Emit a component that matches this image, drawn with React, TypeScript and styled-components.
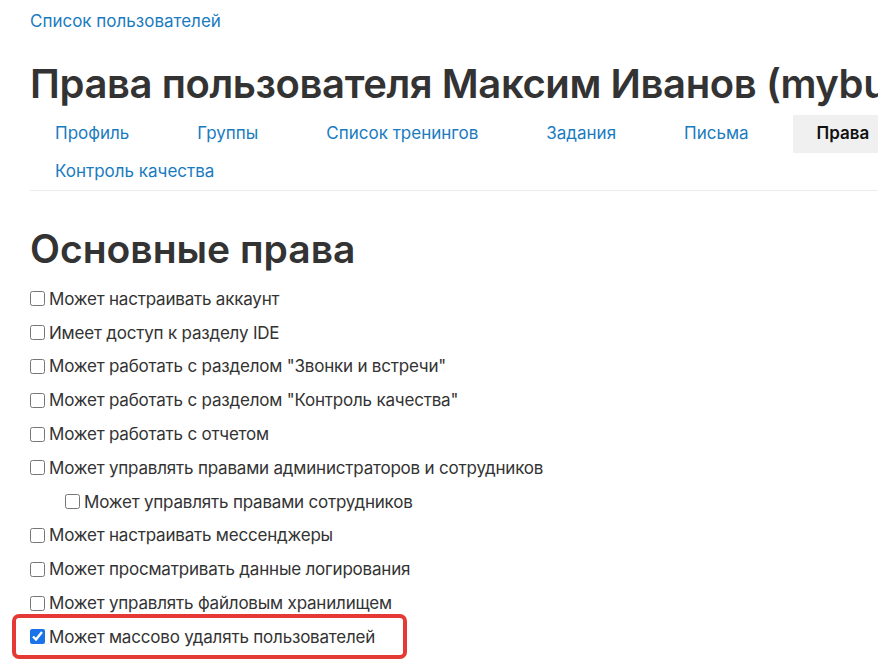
import React from "react";
import styled, { createGlobalStyle } from "styled-components";

const GlobalStyle = createGlobalStyle`
  html, body {
    margin: 0;
    padding: 0;
    background: #fff;
    overflow: hidden;
  }
  body {
    font-family: Inter, "Noto Sans", sans-serif;
    color: #333;
  }
`;

const tabs = [
  { label: "Профиль" },
  { label: "Группы" },
  { label: "Список тренингов" },
  { label: "Задания" },
  { label: "Письма" },
  { label: "Права", active: true },
  { label: "Контроль качества" },
];

const rights = [
  { label: "Может настраивать аккаунт" },
  { label: "Имеет доступ к разделу IDE" },
  { label: 'Может работать с разделом "Звонки и встречи"' },
  { label: 'Может работать с разделом "Контроль качества"' },
  { label: "Может работать с отчетом" },
  { label: "Может управлять правами администраторов и сотрудников" },
  { label: "Может управлять правами сотрудников", nested: true },
  { label: "Может настраивать мессенджеры" },
  { label: "Может просматривать данные логирования" },
  { label: "Может управлять файловым хранилищем" },
  { label: "Может массово удалять пользователей", checked: true, marked: true },
];

const Page = styled.div`
  width: 980px;
  min-height: 672px;
  padding: 9px 0 24px 30px;
  box-sizing: border-box;
`;

const Breadcrumb = styled.a`
  display: block;
  font-size: 17px;
  line-height: 24px;
  color: #1a7bbf;
  text-decoration: none;
`;

const Title = styled.h1`
  margin: 26px 0 0;
  font-size: 40px;
  font-weight: 600;
  letter-spacing: -0.4px;
  line-height: 50px;
  white-space: nowrap;
  color: #333;
`;

const Tabs = styled.nav`
  display: flex;
  flex-wrap: wrap;
  margin-top: 6px;
  padding-left: 1px;
  border-bottom: 1px solid #ececec;
`;

const Tab = styled.a<{ $active?: boolean }>`
  display: block;
  height: 37.5px;
  line-height: 37.5px;
  padding: 0 24px;
  margin-right: 20px;
  font-size: 17px;
  white-space: nowrap;
  text-decoration: none;
  color: ${(p) => (p.$active ? "#111" : "#1a7bbf")};
  font-weight: ${(p) => (p.$active ? 600 : 400)};
  background: ${(p) => (p.$active ? "#f0f0f0" : "transparent")};
`;

const Section = styled.h2`
  margin: 35px 0 10px;
  font-size: 39px;
  font-weight: 600;
  line-height: 46px;
  color: #333;
`;

const List = styled.div`
  display: flex;
  flex-direction: column;
`;

const Row = styled.label<{ $nested?: boolean; $marked?: boolean }>`
  position: relative;
  display: flex;
  align-items: center;
  gap: 4px;
  height: 33.8px;
  padding-left: ${(p) => (p.$nested ? "35px" : "0")};
  font-size: 17px;
  letter-spacing: -0.2px;
  color: #333;
  white-space: nowrap;

  ${(p) =>
    p.$marked &&
    `
    &::after {
      content: "";
      position: absolute;
      left: -18px;
      top: -6px;
      width: 395px;
      height: 45px;
      border: 4px solid #e53935;
      border-radius: 7px;
      box-sizing: border-box;
      pointer-events: none;
    }
  `}
`;

const Box = styled.input`
  width: 15px;
  height: 15px;
  margin: 0;
  accent-color: #1a73e8;
`;

export default function App() {
  return (
    <>
      <GlobalStyle />
      <Page>
        <Breadcrumb href="#">Список пользователей</Breadcrumb>
        <Title>Права пользователя Максим Иванов (mybuh)</Title>
        <Tabs>
          {tabs.map((t) => (
            <Tab key={t.label} href="#" $active={t.active}>
              {t.label}
            </Tab>
          ))}
        </Tabs>
        <Section>Основные права</Section>
        <List>
          {rights.map((r) => (
            <Row key={r.label} $nested={r.nested} $marked={r.marked}>
              <Box type="checkbox" defaultChecked={r.checked} />
              {r.label}
            </Row>
          ))}
        </List>
      </Page>
    </>
  );
}
